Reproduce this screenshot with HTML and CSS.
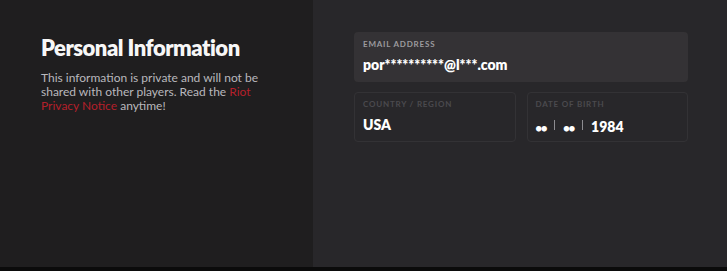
FILE: index.html
```html
<!DOCTYPE html>
<html>
<head>
    <title>Personal Information</title>
    <link rel="stylesheet" href="styles.css">
</head>
<body>
    <div class="page">
        <div class="intro">
            <h1>Personal Information</h1>
            <p>This information is private and will not be shared with other players. Read the <a href="#">Riot Privacy Notice</a> anytime!</p>
        </div>
        <div class="fields">
            <div class="field field-filled">
                <div class="label">Email Address</div>
                <div class="value">por**********@l***.com</div>
            </div>
            <div class="field-row">
                <div class="field field-locked">
                    <div class="label">Country / Region</div>
                    <div class="value">USA</div>
                </div>
                <div class="field field-locked">
                    <div class="label">Date of Birth</div>
                    <div class="value dob">
                        <span class="dots">••</span>
                        <span class="sep"></span>
                        <span class="dots">••</span>
                        <span class="sep"></span>
                        <span>1984</span>
                    </div>
                </div>
            </div>
        </div>
    </div>
    <div class="footer-bar"></div>
</body>
</html>
```

FILE: styles.css
```css
body {
    margin: 0;
    padding: 0;
    background-color: #0b0b0b;
    font-family: Lato, "Noto Sans", sans-serif;
    color: #f4f4f4;
}
.page {
    display: flex;
    height: 267px;
}
.intro {
    width: 313px;
    box-sizing: border-box;
    padding: 34px 40px 0 41px;
    background-color: #1f1e1f;
}
.intro h1 {
    margin: 0;
    font-size: 22px;
    font-weight: 800;
    letter-spacing: -0.5px;
    color: #f7f7f7;
}
.intro p {
    margin: 10px 0 0;
    font-size: 12px;
    line-height: 14px;
    color: #b9b8bd;
    padding-right: 6px;
}
.intro a {
    color: #b4202b;
    text-decoration: none;
}
.fields {
    flex: 1;
    background-color: #28272a;
    padding: 32px 39px 0 41px;
    display: flex;
    flex-direction: column;
    gap: 10px;
}
.field {
    height: 50px;
    box-sizing: border-box;
    border-radius: 4px;
    padding: 7px 9px 0;
}
.field-filled {
    background-color: #343235;
}
.field-locked {
    border: 1px solid #333235;
    flex: 1;
    padding: 6px 8px 0;
}
.field-row {
    display: flex;
    gap: 11px;
}
.label {
    font-size: 8px;
    font-weight: 700;
    letter-spacing: 0.8px;
    text-transform: uppercase;
    color: #9c9b9f;
    line-height: 10px;
}
.field-locked .label {
    color: #4b4a4e;
}
.value {
    margin-top: 7px;
    font-size: 14px;
    font-weight: 800;
    line-height: 18px;
    color: #ffffff;
}
.dob {
    display: flex;
    align-items: center;
    gap: 8px;
}
.dots {
    font-size: 11px;
    letter-spacing: -1px;
    margin-top: 3px;
}
.sep {
    width: 1px;
    height: 10px;
    background-color: #8d8c90;
    margin-top: -3px;
}
.footer-bar {
    height: 4px;
    background-color: #0b0b0b;
}
```
